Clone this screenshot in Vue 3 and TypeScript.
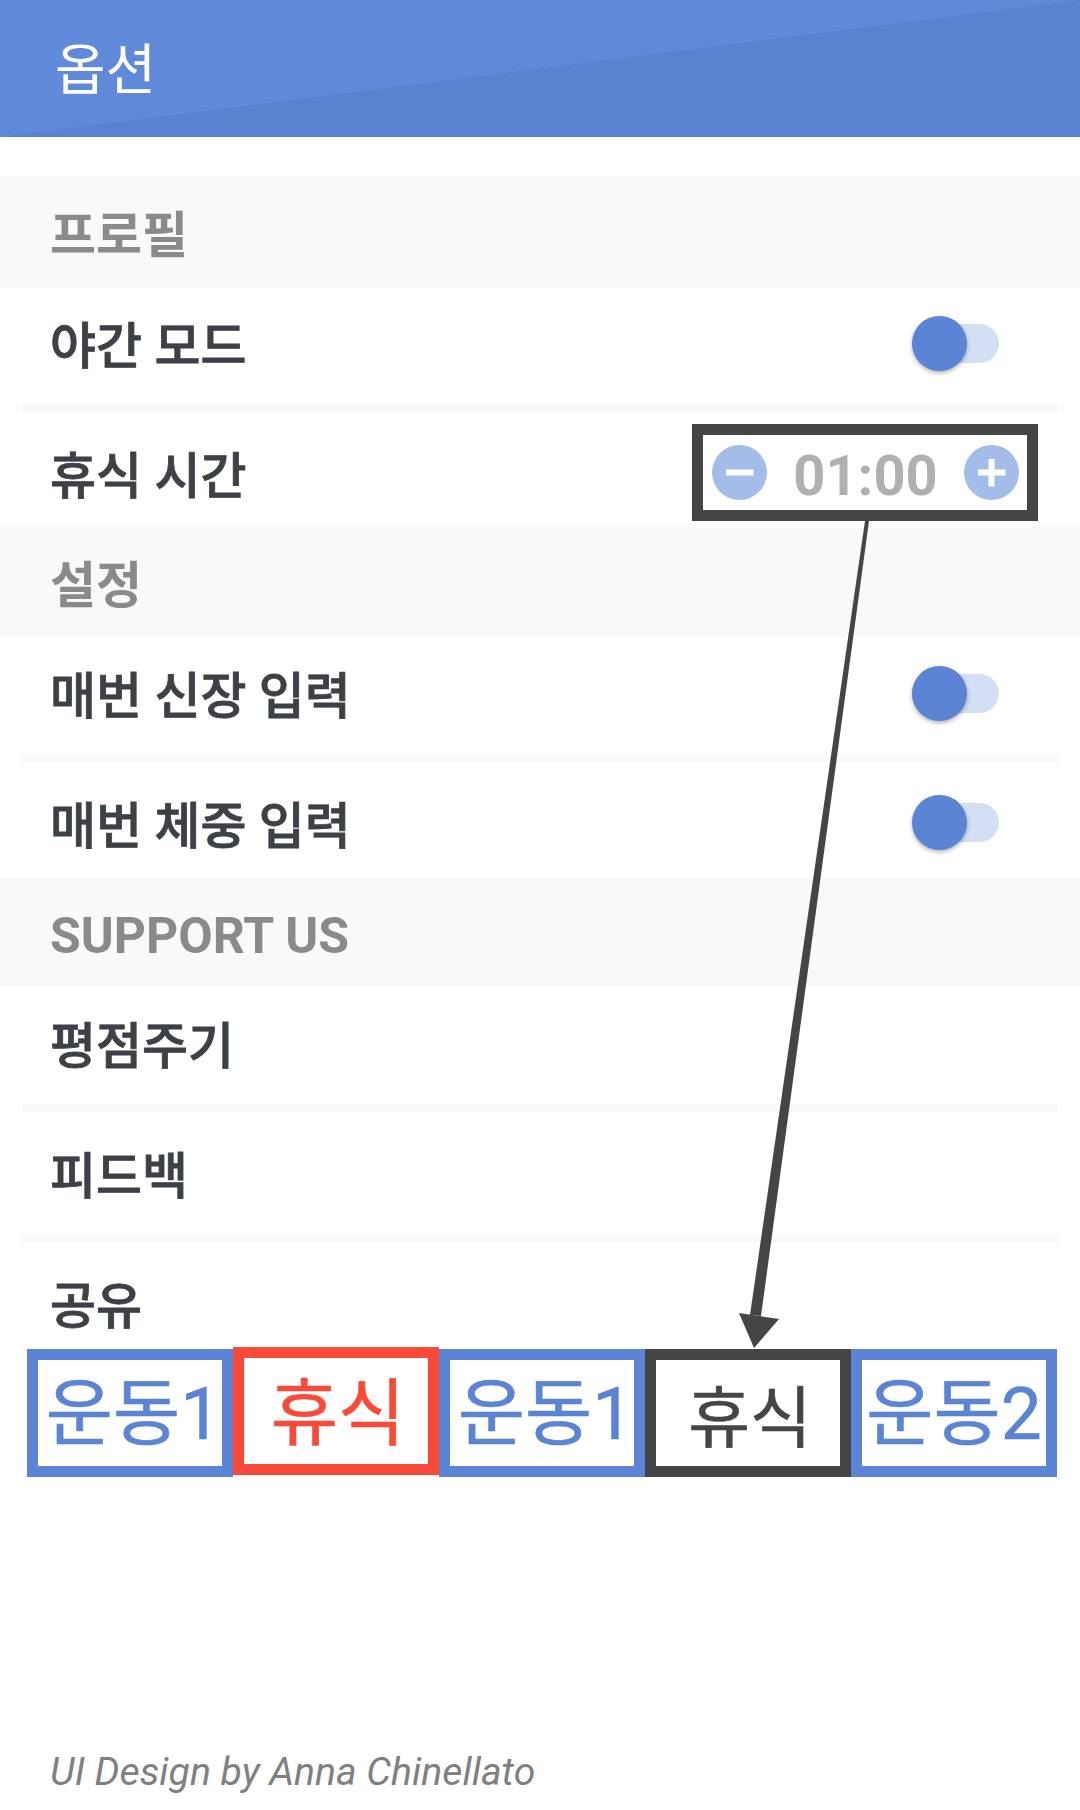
<script setup lang="ts">
interface Row {
  label: string
  control?: 'toggle' | 'timer'
}

interface Section {
  title: string
  latin?: boolean
  rows: Row[]
}

const sections: Section[] = [
  {
    title: '프로필',
    rows: [{ label: '야간 모드', control: 'toggle' }, { label: '휴식 시간', control: 'timer' }]
  },
  {
    title: '설정',
    rows: [
      { label: '매번 신장 입력', control: 'toggle' },
      { label: '매번 체중 입력', control: 'toggle' }
    ]
  },
  {
    title: 'SUPPORT US',
    latin: true,
    rows: [{ label: '평점주기' }, { label: '피드백' }, { label: '공유' }]
  }
]

const steps = [
  { label: '운동1', kind: 'work one' },
  { label: '휴식', kind: 'rest' },
  { label: '운동1', kind: 'work one' },
  { label: '휴식', kind: 'current' },
  { label: '운동2', kind: 'work' }
]
</script>

<template>
  <div class="page">
    <header class="app-bar">옵션</header>

    <div class="settings">
      <section v-for="section in sections" :key="section.title">
        <h2 class="section-title" :class="{ latin: section.latin }">{{ section.title }}</h2>
        <div v-for="row in section.rows" :key="row.label" class="row">
          <span class="row-label">{{ row.label }}</span>

          <span v-if="row.control === 'toggle'" class="toggle">
            <span class="knob"></span>
          </span>

          <div v-if="row.control === 'timer'" class="timer">
            <svg class="timer-btn" viewBox="0 0 55 55">
              <circle cx="27.5" cy="27.5" r="27.5" fill="#a3bde8" />
              <rect x="14" y="24.5" width="27.5" height="6" fill="#fff" />
            </svg>
            <span class="timer-value">01:00</span>
            <svg class="timer-btn" viewBox="0 0 55 55">
              <circle cx="27.5" cy="27.5" r="27.5" fill="#a3bde8" />
              <rect x="14" y="24.5" width="27.5" height="6" fill="#fff" />
              <rect x="24.5" y="14" width="6" height="27.5" fill="#fff" />
            </svg>
          </div>
        </div>
      </section>
    </div>

    <div class="steps">
      <div v-for="(step, index) in steps" :key="index" class="step" :class="step.kind">
        {{ step.label }}
      </div>
    </div>

    <p class="credit">UI Design by Anna Chinellato</p>

    <svg class="arrow" viewBox="0 0 1080 1810">
      <polygon points="865,521 869,521 761,1316 750,1315" fill="#444645" />
      <polygon points="739,1313 779,1319 754,1348" fill="#444645" />
    </svg>
  </div>
</template>

<style scoped>
.page {
  position: relative;
  width: 1080px;
  height: 1810px;
  display: flex;
  flex-direction: column;
  background: #fff;
  font-family: Roboto, 'Noto Sans CJK KR', sans-serif;
  overflow: hidden;
}

.app-bar {
  height: 137px;
  flex: none;
  display: flex;
  align-items: center;
  padding: 0 0 7px 55px;
  box-sizing: border-box;
  background: linear-gradient(to bottom right, #608ad9 50%, #5b82d0 50%);
  color: #fff;
  font-size: 55px;
}

.settings {
  margin-top: 40px;
}

.section-title {
  height: 110px;
  margin: 0;
  padding: 0 0 2px 50px;
  box-sizing: border-box;
  display: flex;
  align-items: center;
  background: #f9f9f9;
  color: #8a8a8a;
  font-size: 50px;
  font-weight: 700;
}

.section-title.latin {
  padding-top: 8px;
  padding-bottom: 0;
}

.row {
  height: 117px;
  margin: 0 22px;
  padding: 0 29px 5px 28px;
  box-sizing: border-box;
  display: flex;
  align-items: center;
  justify-content: space-between;
}

.row + .row {
  height: 123px;
  padding-top: 6px;
  padding-bottom: 0;
  border-top: 8px solid #f9f9f9;
}

.row + .row:not(:last-child) {
  height: 130px;
  padding-top: 0;
}

.row-label {
  margin-bottom: 2px;
  color: #3c4148;
  font-size: 50px;
  font-weight: 500;
  -webkit-text-stroke: 0.8px #3c4148;
}

.toggle {
  position: relative;
  width: 87px;
  height: 39px;
  margin-right: 30px;
  border-radius: 20px;
  background: #d3dff3;
}

.knob {
  position: absolute;
  left: 0;
  top: -8px;
  width: 55px;
  height: 55px;
  border-radius: 50%;
  background: #5b84d4;
  box-shadow: 0 2px 4px rgba(0, 0, 0, 0.3);
}

.timer {
  width: 346px;
  height: 97px;
  box-sizing: border-box;
  margin-right: -9px;
  padding: 0 8px 0 9px;
  display: flex;
  align-items: center;
  justify-content: space-between;
  border: 11px solid #444645;
}

.timer-btn {
  width: 55px;
  height: 55px;
}

.timer-value {
  padding-top: 7px;
  color: #b0b0b0;
  font-size: 56px;
  font-weight: 700;
}

.steps {
  display: flex;
  margin: -8px 0 0 27px;
}

.step {
  width: 206px;
  height: 128px;
  padding-bottom: 12px;
  box-sizing: border-box;
  display: flex;
  align-items: center;
  justify-content: center;
  border: 11px solid #5b84d4;
  color: #5b84d4;
  font-size: 73px;
  white-space: nowrap;
  -webkit-text-stroke: 0.6px currentColor;
}

.step.one {
  padding-left: 7px;
}

.step.rest {
  margin-top: -2px;
  padding-bottom: 9px;
  padding-left: 4px;
  border-color: #f94a39;
  color: #f94a39;
}

.step.current {
  padding-bottom: 2px;
  padding-left: 4px;
  border-color: #444645;
  color: #444645;
  font-size: 67px;
}

.credit {
  margin: auto 0 0;
  padding: 0 0 15px 50px;
  color: #808080;
  font-size: 39.2px;
  font-style: italic;
}

.arrow {
  position: absolute;
  left: 0;
  top: 0;
  width: 1080px;
  height: 1810px;
  pointer-events: none;
}
</style>
